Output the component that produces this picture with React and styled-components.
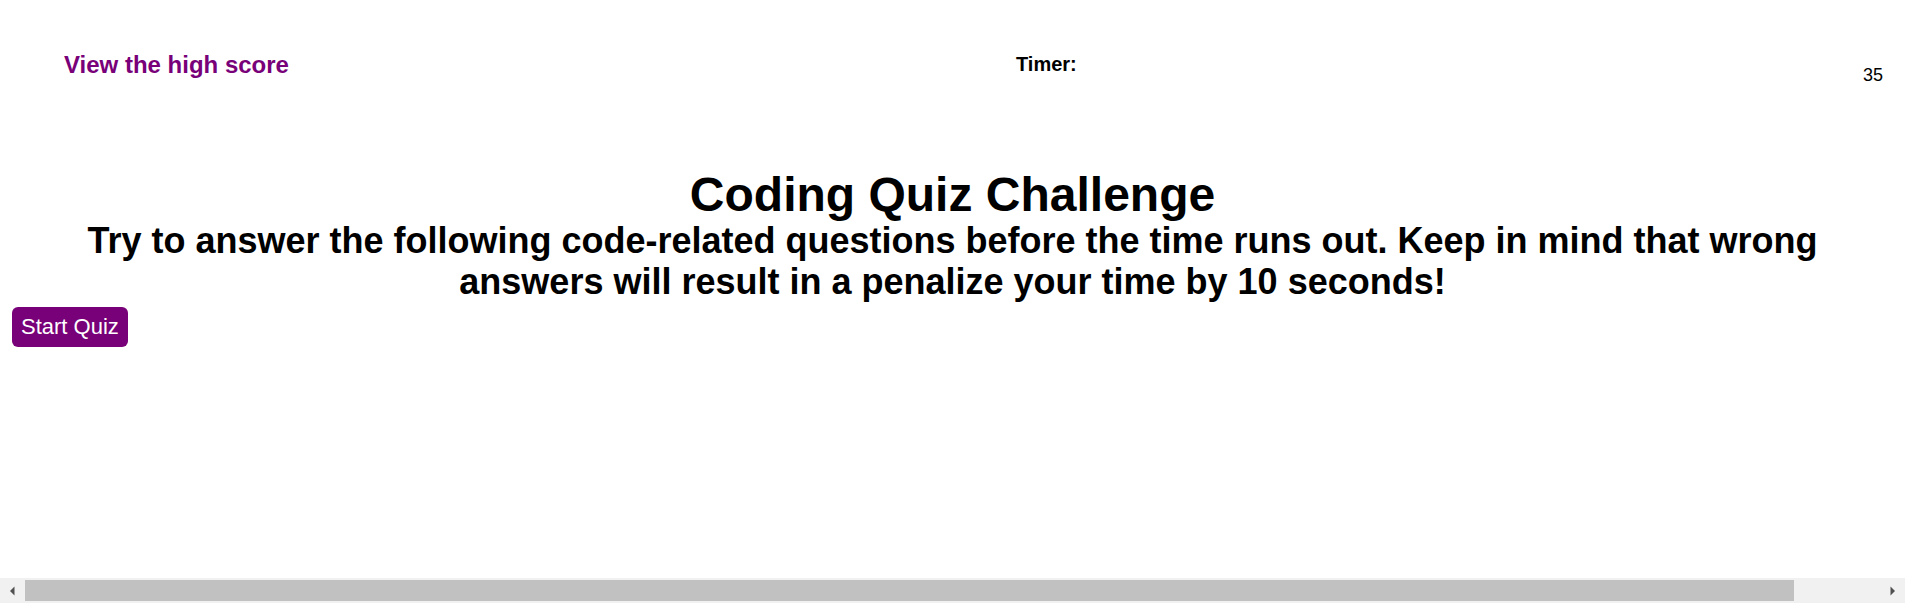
import React from "react";
import styled, { createGlobalStyle } from "styled-components";

const GlobalStyle = createGlobalStyle`
  html, body {
    margin: 0;
    padding: 0;
    background: #ffffff;
    color: #000000;
    font-family: "Liberation Sans", Arial, Helvetica, sans-serif;
    overflow: hidden;
  }
`;

const Page = styled.div`
  width: 1905px;
  min-height: 603px;
  box-sizing: border-box;
`;

const Header = styled.header`
  display: grid;
  grid-template-columns: 952px 1fr auto;
  align-items: start;
  min-height: 170px;
  box-sizing: border-box;
  padding: 51px 22px 0 64px;
`;

const HighScoreLink = styled.a`
  font-size: 24px;
  font-weight: bold;
  line-height: normal;
  color: #780078;
  text-decoration: none;
  justify-self: start;
`;

const TimerLabel = styled.div`
  font-size: 20px;
  font-weight: bold;
  line-height: normal;
  margin-top: 2px;
`;

const TimeLeft = styled.div`
  font-size: 18px;
  line-height: normal;
  margin-top: 14px;
`;

const Main = styled.main`
  display: flex;
  flex-direction: column;
  align-items: stretch;
`;

const Title = styled.h1`
  margin: 0;
  font-size: 48px;
  line-height: 50px;
  font-weight: bold;
  text-align: center;
`;

const Intro = styled.h2`
  margin: 0;
  padding: 0 40px;
  font-size: 36px;
  line-height: 41px;
  font-weight: bold;
  text-align: center;
`;

const StartButton = styled.button`
  align-self: flex-start;
  margin: 5px 0 0 12px;
  padding: 7px 9px;
  border: none;
  border-radius: 6px;
  background: #780078;
  color: #ffffff;
  font-family: "Liberation Sans", Arial, Helvetica, sans-serif;
  font-size: 22px;
  line-height: normal;
  cursor: pointer;
`;

const FakeScrollbar = styled.div`
  position: fixed;
  left: 0;
  right: 0;
  bottom: 0;
  height: 25px;
  display: flex;
  background: #f1f1f1;
`;

const ScrollArrow = styled.div`
  width: 25px;
  flex: 0 0 25px;
  display: flex;
  align-items: center;
  justify-content: center;
`;

const ScrollTrack = styled.div`
  flex: 1;
  padding: 2px 0;
  box-sizing: border-box;
`;

const ScrollThumb = styled.div`
  width: 1769px;
  height: 100%;
  background: #c1c1c1;
`;

const Arrow = ({ dir }) => (
  <svg width="7" height="10" viewBox="0 0 7 10">
    {dir === "left" ? (
      <polygon points="5.5,0.5 1,5 5.5,9.5" fill="#505050" />
    ) : (
      <polygon points="1.5,0.5 6,5 1.5,9.5" fill="#505050" />
    )}
  </svg>
);

export default function App() {
  return (
    <>
      <GlobalStyle />
      <Page>
        <Header>
          <HighScoreLink href="#">View the high score</HighScoreLink>
          <TimerLabel>Timer:</TimerLabel>
          <TimeLeft>35</TimeLeft>
        </Header>
        <Main>
          <Title>Coding Quiz Challenge</Title>
          <Intro>
            Try to answer the following code-related questions before the time
            runs out. Keep in mind that wrong answers will result in a penalize
            your time by 10 seconds!
          </Intro>
          <StartButton type="button">Start Quiz</StartButton>
        </Main>
      </Page>
      <FakeScrollbar>
        <ScrollArrow>
          <Arrow dir="left" />
        </ScrollArrow>
        <ScrollTrack>
          <ScrollThumb />
        </ScrollTrack>
        <ScrollArrow>
          <Arrow dir="right" />
        </ScrollArrow>
      </FakeScrollbar>
    </>
  );
}
